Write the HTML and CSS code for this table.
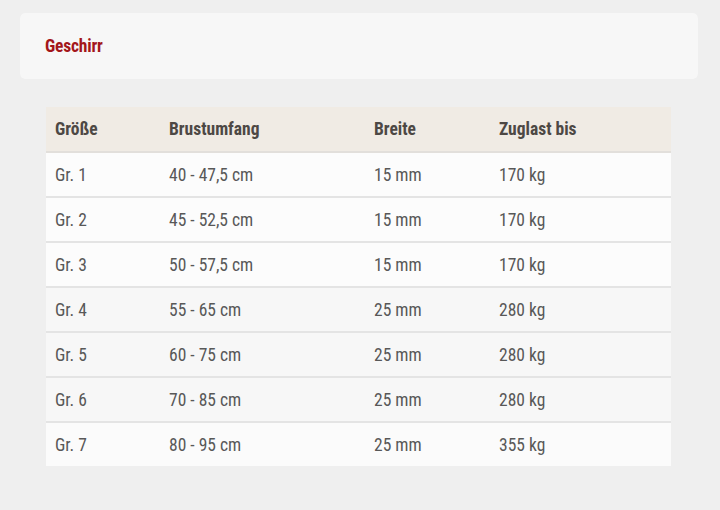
FILE: index.html
```html
<!DOCTYPE html>
<html lang="de">
<head>
<meta charset="utf-8">
<link rel="stylesheet" href="styles.css">
</head>
<body>
<div class="page">
  <div class="card"><h2 class="title">Geschirr</h2></div>
  <table class="sizes">
    <thead>
      <tr><th class="c1">Größe</th><th class="c2">Brustumfang</th><th class="c3">Breite</th><th class="c4">Zuglast bis</th></tr>
    </thead>
    <tbody>
      <tr><td>Gr. 1</td><td>40 - 47,5 cm</td><td>15 mm</td><td>170 kg</td></tr>
      <tr><td>Gr. 2</td><td>45 - 52,5 cm</td><td>15 mm</td><td>170 kg</td></tr>
      <tr><td>Gr. 3</td><td>50 - 57,5 cm</td><td>15 mm</td><td>170 kg</td></tr>
      <tr><td>Gr. 4</td><td>55 - 65 cm</td><td>25 mm</td><td>280 kg</td></tr>
      <tr><td>Gr. 5</td><td>60 - 75 cm</td><td>25 mm</td><td>280 kg</td></tr>
      <tr><td>Gr. 6</td><td>70 - 85 cm</td><td>25 mm</td><td>280 kg</td></tr>
      <tr><td>Gr. 7</td><td>80 - 95 cm</td><td>25 mm</td><td>355 kg</td></tr>
    </tbody>
  </table>
</div>
</body>
</html>
```
FILE: styles.css
```css
html, body { margin: 0; padding: 0; }
body {
  background: #efefef;
  font-family: Roboto, "Liberation Sans", sans-serif;
  font-stretch: condensed;
  width: 720px;
  height: 510px;
  overflow: hidden;
}
.page { padding: 13px 22px 0 20px; }
.card {
  background: #f7f7f7;
  border-radius: 5px;
  height: 66px;
  display: flex;
  align-items: center;
  padding-left: 25px;
  box-shadow: 0 0 1px rgba(0,0,0,0.03);
}
.title {
  margin: 0;
  font-size: 17.5px;
  font-weight: 700;
  color: #a3161a;
  letter-spacing: -0.2px;
}
.sizes {
  margin: 28px 0 0 26px;
  width: 625px;
  border-collapse: collapse;
  font-size: 17.5px;
  color: #585858;
}
.sizes th {
  background: #f0ebe4;
  height: 44px;
  text-align: left;
  font-weight: 700;
  color: #4d4844;
  padding: 0 0 0 9px;
  border-bottom: 2px solid #e2dfdb;
}
.sizes .c1 { width: 105px; }
.sizes .c2 { width: 196px; }
.sizes .c3 { width: 116px; }
.sizes td {
  height: 43px;
  padding: 0 0 0 9px;
  border-bottom: 2px solid #e4e4e4;
}
.sizes tbody tr { background: #fcfcfc; }
.sizes tbody tr:nth-child(n+4) { background: #f7f7f7; }
.sizes tbody tr:last-child { background: #fbfbfb; border-bottom: 0; }
.sizes tbody tr:last-child td { border-bottom: 0; }
```
